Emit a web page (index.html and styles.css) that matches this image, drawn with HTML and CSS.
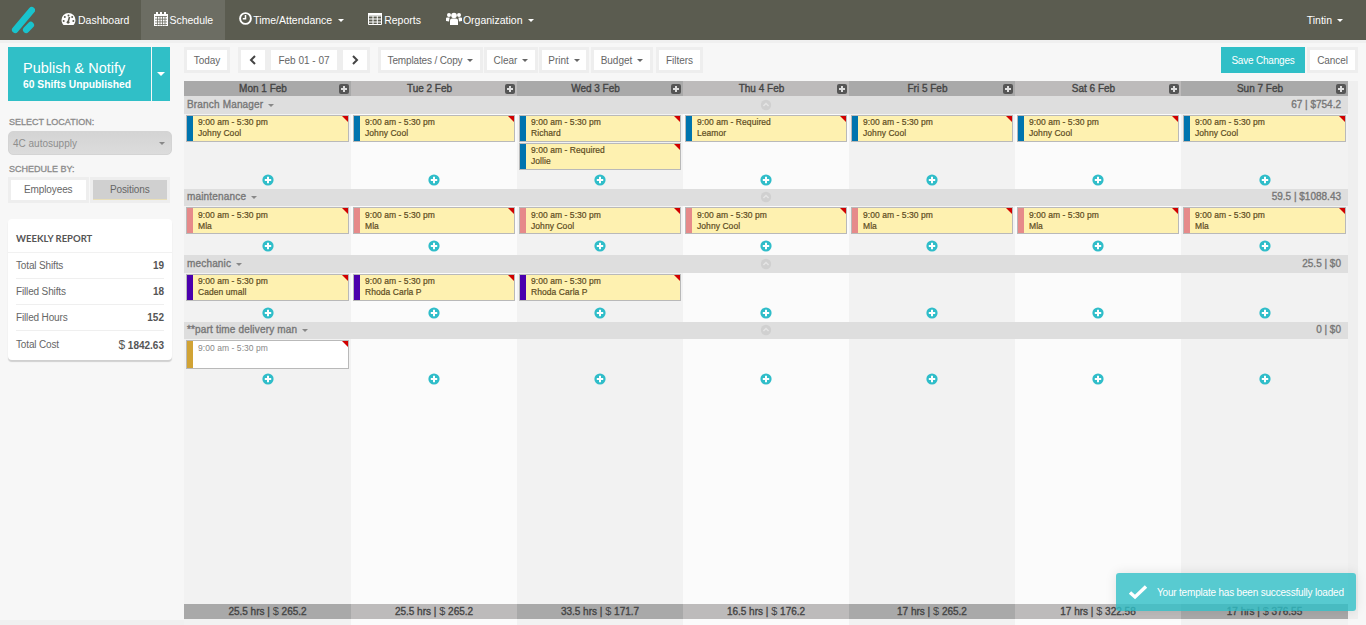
FILE: index.html
```html
<!DOCTYPE html>
<html lang="en">
<head>
<meta charset="utf-8">
<title>Schedule</title>
<link rel="stylesheet" href="styles.css">
</head>
<body>
<svg class="defs" width="0" height="0" aria-hidden="true">
  <defs>
    <g id="add"><circle cx="6" cy="6" r="5.6" fill="#2fbdc9"/><path d="M6 2.8v6.4M2.8 6h6.4" stroke="#fff" stroke-width="2"/></g>
    <g id="up"><circle cx="6" cy="6" r="5.2" fill="#d0d0d0"/><path d="M3.4 7 6 4.5 8.6 7" fill="none" stroke="#e4e4e4" stroke-width="1.6"/></g>
    <g id="dayplus"><rect x="0" y="0" width="10" height="10" rx="2" fill="#555"/><path d="M5 2v6M2 5h6" stroke="#ddd" stroke-width="2"/></g>
  </defs>
</svg>
<header class="topbar">
  <a class="logo" href="#"><svg width="26" height="34" viewBox="0 0 26 34"><path d="M6.200 26.800 22.800 7.200M17.200 26.800 21.800 22" stroke="#19c3cd" stroke-width="6.500" stroke-linecap="round" fill="none"/></svg></a>
  <nav class="nav">
    <a class="nav-item nav-dash" href="#"><svg class="ico" width="15" height="12" viewBox="0 0 14 12"><path d="M7 0a7 7 0 0 1 7 7c0 2-.8 3.600-2 5H2C.8 10.600 0 9 0 7a7 7 0 0 1 7-7z" fill="#fff"/><circle cx="7" cy="2.500" r="1" fill="#5b5c50"/><circle cx="3.300" cy="4" r="1" fill="#5b5c50"/><circle cx="10.700" cy="4" r="1" fill="#5b5c50"/><circle cx="2.200" cy="8" r="1" fill="#5b5c50"/><circle cx="11.800" cy="8" r="1" fill="#5b5c50"/><path d="M8 4 6.600 9" stroke="#5b5c50" stroke-width="1.600"/><circle cx="6.600" cy="9.300" r="1.400" fill="#5b5c50"/></svg>Dashboard</a>
    <a class="nav-item nav-active" href="#"><svg class="ico" width="14" height="14" viewBox="0 0 14 14"><path d="M0 2h14v12H0z" fill="#fff"/><path d="M3 0v3M7 0v3M11 0v3" stroke="#fff" stroke-width="2"/><path d="M1 4.500h12M1 7.200h12M1 9.900h12M1 12.500h12M3.500 4v9.500M6 4v9.500M8.500 4v9.500M11 4v9.500" stroke="#6c6d63" stroke-width=".8"/></svg>Schedule</a>
    <a class="nav-item nav-time" href="#"><svg class="ico" width="13" height="13" viewBox="0 0 13 13"><circle cx="6.500" cy="6.500" r="5.400" fill="none" stroke="#fff" stroke-width="1.900"/><path d="M6.500 3v3.800H3.800" fill="none" stroke="#fff" stroke-width="1.500"/></svg>Time/Attendance<i class="caret caret-light"></i></a>
    <a class="nav-item nav-reports" href="#"><svg class="ico" width="14" height="12" viewBox="0 0 14 12"><path d="M.5.500h13v11H.5zM.5 3h13M.5 6h13M.5 9h13M5 3v8.500M9.300 3v8.500" fill="none" stroke="#fff"/><path d="M0 0h14v2.500H0z" fill="#fff"/></svg>Reports</a>
    <a class="nav-item nav-org" href="#"><svg class="ico" width="16" height="13" viewBox="0 0 16 13"><circle cx="8" cy="3.500" r="2.800" fill="#fff"/><circle cx="3" cy="3" r="2" fill="#fff"/><circle cx="13" cy="3" r="2" fill="#fff"/><path d="M4 13V8.500Q4 6.500 6 6.500h4q2 0 2 2V13zM0 9V6.500Q0 5.500 1 5.500h2.600L3 9.500zM16 9V6.500q0-1-1-1h-2.600l.6 4z" fill="#fff"/></svg>Organization<i class="caret caret-light"></i></a>
  </nav>
  <a class="nav-user" href="#">Tintin<i class="caret caret-light"></i></a>
</header>

<div class="layout">
  <aside class="sidebar">
    <div class="publish">
      <a class="publish-main" href="#"><span class="publish-title">Publish &amp; Notify</span><span class="publish-sub">60 Shifts Unpublished</span></a>
      <a class="publish-drop" href="#"><i class="caret caret-white"></i></a>
    </div>
    <label class="side-label side-label-first">SELECT LOCATION:</label>
    <div class="select"><span>4C autosupply</span><i class="caret caret-grey"></i></div>
    <label class="side-label side-label-second">SCHEDULE BY:</label>
    <div class="tabs">
      <a class="tab tab-on" href="#"><span>Employees</span></a>
      <a class="tab tab-off" href="#"><span>Positions</span></a>
    </div>
    <section class="report">
      <h3 class="report-title">WEEKLY REPORT</h3>
      <div class="report-row"><span>Total Shifts</span><b>19</b></div>
      <div class="report-row"><span>Filled Shifts</span><b>18</b></div>
      <div class="report-row"><span>Filled Hours</span><b>152</b></div>
      <div class="report-row"><span>Total Cost</span><b class="report-cost"><em>$</em> 1842.63</b></div>
    </section>
  </aside>

  <main class="main">
    <div class="toolbar">
      <a class="btn btn-today" href="#"><span>Today</span></a>
      <div class="btn-group">
        <a class="btn btn-arrow" href="#"><span><svg width="8" height="10" viewBox="0 0 8 10"><path d="M6 1 2 5l4 4" fill="none" stroke="#444" stroke-width="2"/></svg></span></a>
        <a class="btn btn-range" href="#"><span>Feb 01 - 07</span></a>
        <a class="btn btn-arrow" href="#"><span><svg width="8" height="10" viewBox="0 0 8 10"><path d="M2 1l4 4-4 4" fill="none" stroke="#444" stroke-width="2"/></svg></span></a>
      </div>
      <div class="btn-group btn-group-menus">
        <a class="btn btn-templates" href="#"><span>Templates / Copy<i class="caret caret-dark"></i></span></a>
        <a class="btn btn-clear" href="#"><span>Clear<i class="caret caret-dark"></i></span></a>
        <a class="btn btn-print" href="#"><span>Print<i class="caret caret-dark"></i></span></a>
        <a class="btn btn-budget" href="#"><span>Budget<i class="caret caret-dark"></i></span></a>
      </div>
      <a class="btn btn-filters" href="#"><span>Filters</span></a>
      <div class="toolbar-right">
        <a class="btn-save" href="#">Save Changes</a>
        <a class="btn btn-cancel" href="#"><span>Cancel</span></a>
      </div>
    </div>

    <div class="board">
      <div class="schedule">
        <div class="days">
          <div class="day day-a">Mon 1 Feb<svg class="day-plus"><use href="#dayplus"/></svg></div>
          <div class="day day-b">Tue 2 Feb<svg class="day-plus"><use href="#dayplus"/></svg></div>
          <div class="day day-a">Wed 3 Feb<svg class="day-plus"><use href="#dayplus"/></svg></div>
          <div class="day day-b">Thu 4 Feb<svg class="day-plus"><use href="#dayplus"/></svg></div>
          <div class="day day-a">Fri 5 Feb<svg class="day-plus"><use href="#dayplus"/></svg></div>
          <div class="day day-b">Sat 6 Feb<svg class="day-plus"><use href="#dayplus"/></svg></div>
          <div class="day day-a">Sun 7 Feb<svg class="day-plus"><use href="#dayplus"/></svg></div>
        </div>

        <div class="group-head"><span class="group-name">Branch Manager<i class="caret caret-grey"></i></span><svg class="group-up"><use href="#up"/></svg><span class="group-total">67 | $754.2</span></div>
        <div class="cells cells-double">
          <div class="cell cell-a"><div class="shift"><i class="strip strip-blue"></i><p>9:00 am - 5:30 pm</p><p>Johny Cool</p></div><svg class="add"><use href="#add"/></svg></div>
          <div class="cell cell-b"><div class="shift"><i class="strip strip-blue"></i><p>9:00 am - 5:30 pm</p><p>Johny Cool</p></div><svg class="add"><use href="#add"/></svg></div>
          <div class="cell cell-a"><div class="shift"><i class="strip strip-blue"></i><p>9:00 am - 5:30 pm</p><p>Richard</p></div><div class="shift"><i class="strip strip-blue"></i><p>9:00 am - Required</p><p>Jollie</p></div><svg class="add"><use href="#add"/></svg></div>
          <div class="cell cell-b"><div class="shift"><i class="strip strip-blue"></i><p>9:00 am - Required</p><p>Leamor</p></div><svg class="add"><use href="#add"/></svg></div>
          <div class="cell cell-a"><div class="shift"><i class="strip strip-blue"></i><p>9:00 am - 5:30 pm</p><p>Johny Cool</p></div><svg class="add"><use href="#add"/></svg></div>
          <div class="cell cell-b"><div class="shift"><i class="strip strip-blue"></i><p>9:00 am - 5:30 pm</p><p>Johny Cool</p></div><svg class="add"><use href="#add"/></svg></div>
          <div class="cell cell-a"><div class="shift"><i class="strip strip-blue"></i><p>9:00 am - 5:30 pm</p><p>Johny Cool</p></div><svg class="add"><use href="#add"/></svg></div>
        </div>

        <div class="group-head"><span class="group-name">maintenance<i class="caret caret-grey"></i></span><svg class="group-up"><use href="#up"/></svg><span class="group-total">59.5 | $1088.43</span></div>
        <div class="cells">
          <div class="cell cell-a"><div class="shift"><i class="strip strip-pink"></i><p>9:00 am - 5:30 pm</p><p>Mla</p></div><svg class="add"><use href="#add"/></svg></div>
          <div class="cell cell-b"><div class="shift"><i class="strip strip-pink"></i><p>9:00 am - 5:30 pm</p><p>Mla</p></div><svg class="add"><use href="#add"/></svg></div>
          <div class="cell cell-a"><div class="shift"><i class="strip strip-pink"></i><p>9:00 am - 5:30 pm</p><p>Johny Cool</p></div><svg class="add"><use href="#add"/></svg></div>
          <div class="cell cell-b"><div class="shift"><i class="strip strip-pink"></i><p>9:00 am - 5:30 pm</p><p>Johny Cool</p></div><svg class="add"><use href="#add"/></svg></div>
          <div class="cell cell-a"><div class="shift"><i class="strip strip-pink"></i><p>9:00 am - 5:30 pm</p><p>Mla</p></div><svg class="add"><use href="#add"/></svg></div>
          <div class="cell cell-b"><div class="shift"><i class="strip strip-pink"></i><p>9:00 am - 5:30 pm</p><p>Mla</p></div><svg class="add"><use href="#add"/></svg></div>
          <div class="cell cell-a"><div class="shift"><i class="strip strip-pink"></i><p>9:00 am - 5:30 pm</p><p>Mla</p></div><svg class="add"><use href="#add"/></svg></div>
        </div>

        <div class="group-head"><span class="group-name">mechanic<i class="caret caret-grey"></i></span><svg class="group-up"><use href="#up"/></svg><span class="group-total">25.5 | $0</span></div>
        <div class="cells">
          <div class="cell cell-a"><div class="shift"><i class="strip strip-purple"></i><p>9:00 am - 5:30 pm</p><p>Caden umall</p></div><svg class="add"><use href="#add"/></svg></div>
          <div class="cell cell-b"><div class="shift"><i class="strip strip-purple"></i><p>9:00 am - 5:30 pm</p><p>Rhoda Carla P</p></div><svg class="add"><use href="#add"/></svg></div>
          <div class="cell cell-a"><div class="shift"><i class="strip strip-purple"></i><p>9:00 am - 5:30 pm</p><p>Rhoda Carla P</p></div><svg class="add"><use href="#add"/></svg></div>
          <div class="cell cell-b"><svg class="add"><use href="#add"/></svg></div>
          <div class="cell cell-a"><svg class="add"><use href="#add"/></svg></div>
          <div class="cell cell-b"><svg class="add"><use href="#add"/></svg></div>
          <div class="cell cell-a"><svg class="add"><use href="#add"/></svg></div>
        </div>

        <div class="group-head"><span class="group-name">**part time delivery man<i class="caret caret-grey"></i></span><svg class="group-up"><use href="#up"/></svg><span class="group-total">0 | $0</span></div>
        <div class="cells">
          <div class="cell cell-a"><div class="shift shift-open"><i class="strip strip-gold"></i><p>9:00 am - 5:30 pm</p></div><svg class="add"><use href="#add"/></svg></div>
          <div class="cell cell-b"><svg class="add"><use href="#add"/></svg></div>
          <div class="cell cell-a"><svg class="add"><use href="#add"/></svg></div>
          <div class="cell cell-b"><svg class="add"><use href="#add"/></svg></div>
          <div class="cell cell-a"><svg class="add"><use href="#add"/></svg></div>
          <div class="cell cell-b"><svg class="add"><use href="#add"/></svg></div>
          <div class="cell cell-a"><svg class="add"><use href="#add"/></svg></div>
        </div>

        <div class="cells cells-fill">
          <div class="cell-a"></div><div class="cell-b"></div><div class="cell-a"></div><div class="cell-b"></div><div class="cell-a"></div><div class="cell-b"></div><div class="cell-a"></div>
        </div>

        <div class="days days-foot">
          <div class="day day-a">25.5 hrs | <em>$</em> 265.2</div>
          <div class="day day-b">25.5 hrs | <em>$</em> 265.2</div>
          <div class="day day-a">33.5 hrs | <em>$</em> 171.7</div>
          <div class="day day-b">16.5 hrs | <em>$</em> 176.2</div>
          <div class="day day-a">17 hrs | <em>$</em> 265.2</div>
          <div class="day day-b">17 hrs | <em>$</em> 322.58</div>
          <div class="day day-a">17 hrs | <em>$</em> 376.55</div>
        </div>

        <div class="cells cells-tail">
          <div class="cell-a"></div><div class="cell-b"></div><div class="cell-a"></div><div class="cell-b"></div><div class="cell-a"></div><div class="cell-b"></div><div class="cell-a"></div>
        </div>
      </div>
      <div class="gutter"></div>
    </div>
  </main>
</div>

<div class="toast">
  <svg class="toast-check" width="20" height="16" viewBox="0 0 20 16"><path d="M2 8.500 7 13 18 2.500" fill="none" stroke="#fff" stroke-width="3.400"/></svg>
  <span>Your template has been successfully loaded</span>
</div>
</body>
</html>
```

FILE: styles.css
```css
* { box-sizing: border-box; }
html, body { margin: 0; height: 100%; }
body {
  background: #f0f0f0;
  font-family: "Liberation Sans", Arial, sans-serif;
  font-size: 10px;
  color: #666;
  overflow: hidden;
}
a { color: inherit; text-decoration: none; }
p, h3 { margin: 0; }
em { font-style: normal; }
.defs { position: absolute; }

/* top bar */
.topbar {
  height: 40px;
  background: #5b5c50;
  display: flex;
  align-items: stretch;
  color: #fff;
  font-size: 10.500px;
}
.logo { width: 48px; padding: 3px 0 0 9px; display: block; }
.nav { display: flex; }
.nav-item {
  display: flex;
  align-items: center;
  padding: 0 12px 0 13px;
  gap: 1px;
}
.nav-active { background: #6c6d63; }
.nav-dash .ico { margin-right: 1px; }
.nav-time { padding-left: 14px; }
.nav-reports { padding-left: 12px; }
.nav-reports .ico { margin-right: 1px; }
.nav-org { padding-left: 13px; }
.ico { flex: none; margin-top: -3px; }
.nav-user { margin-left: auto; margin-right: 23px; display: flex; align-items: center; }
.caret {
  display: inline-block;
  width: 0;
  height: 0;
  margin-left: 5px;
  border-left: 3.500px solid transparent;
  border-right: 3.500px solid transparent;
  border-top: 3.500px solid #fff;
  vertical-align: middle;
}
.caret-white { border-left-width: 4px; border-right-width: 4px; border-top-width: 4px; margin: 0; }
.caret-grey { border-top-color: #888; }
.caret-dark { border-top-color: #666; }

.layout { display: flex; height: 585px; padding-top: 3px; }

/* side column */
.sidebar {
  width: 184px;
  height: 577px;
  flex: none;
  background: #f7f7f7;
  padding: 4px 12px 0 8px;
}
.publish { display: flex; height: 54px; width: 162px; color: #fff; }
.publish-main {
  width: 143px;
  background: #30bfc7;
  padding: 13px 0 0 15px;
  display: flex;
  flex-direction: column;
}
.publish-title { font-size: 14.500px; line-height: 16px; }
.publish-sub { font-size: 10.300px; font-weight: bold; line-height: 15px; margin-top: 1px; }
.publish-drop {
  margin-left: 1px;
  width: 18px;
  background: #30bfc7;
  display: flex;
  align-items: center;
  justify-content: center;
}
.side-label {
  display: block;
  font-size: 9px;
  color: #8b8b8b;
  line-height: 12px;
  margin-left: 1px;
  -webkit-text-stroke: .3px #8b8b8b;
}
.side-label-first { margin-top: 15px; }
.side-label-second { margin-top: 8px; }
.select {
  margin-top: 3px;
  width: 164px;
  height: 24px;
  border-radius: 5px;
  background: linear-gradient(#d4d4d4, #dcdcdc);
  border: 1px solid #d4d4d4;
  color: #8e8e8e;
  font-size: 10px;
  display: flex;
  align-items: center;
  justify-content: space-between;
  padding: 0 6px 0 4px;
}
.tabs { display: flex; gap: 1px; margin-top: 2px; width: 162px; }
.tab { flex: 1; height: 26px; border: 3px solid #eee; display: block; color: #666; letter-spacing: -.1px; }
.tab span { display: flex; height: 100%; align-items: center; justify-content: center; padding-bottom: 1px; }
.tab-on span { background: #fff; }
.tab-off span { background: #d0d0d0; border-bottom: 1px solid #e9dfb8; }
.report {
  margin-top: 16px;
  width: 164px;
  height: 141px;
  background: #fff;
  border-radius: 4px;
  box-shadow: 0 2px 1px #d0d0d0;
  padding: 0 8px;
}
.report-title {
  font-family: Lato, "Liberation Sans", sans-serif;
  font-size: 9.500px;
  font-weight: bold;
  color: #555;
  line-height: 33px;
  height: 33.500px;
  padding: 3px 0 0 8px;
  border-bottom: 1px solid #f1f1f1;
  margin: 0 -8px;
}
.report-row {
  height: 26.300px;
  display: flex;
  align-items: center;
  justify-content: space-between;
  border-bottom: 1px solid #efefef;
  color: #666;
  font-size: 10px;
}
.report-row span { letter-spacing: -.15px; }
.report-row:last-child { border-bottom: 0; }
.report-row b { color: #555; font-size: 10px; }
.report-row .report-cost em { font-size: 12px; font-weight: normal; }

/* toolbar */
.main { flex: 1; min-width: 0; background: #f7f7f7; padding-top: 4px; display: flex; flex-direction: column; }
.toolbar { display: flex; height: 26px; padding-right: 8px; }
.btn { height: 26px; border: 3px solid #eee; display: block; color: #666; font-size: 10px; flex: none; }
.btn > span { background: #fff; height: 100%; display: flex; align-items: center; justify-content: center; }
.btn-group { display: flex; margin-left: 8px; }
.btn-today { width: 46px; }
.btn-arrow { width: 30px; }
.btn-range { width: 72px; }
.btn-group-menus { gap: 1px; }
.btn-templates { width: 105px; letter-spacing: -.15px; }
.btn-clear { width: 54px; }
.btn-print { width: 50px; }
.btn-budget { width: 62px; margin-left: 1px; }
.btn-filters { width: 47px; margin-left: 3px; }
.toolbar-right { margin-left: auto; display: flex; gap: 2px; }
.btn-save {
  width: 84px;
  background: #30bfc7;
  color: #fff;
  display: flex;
  align-items: center;
  justify-content: center;
  font-size: 10px;
  letter-spacing: -.2px;
}
.btn-cancel { width: 51px; letter-spacing: -.1px; }

/* schedule */
.board { display: flex; margin-top: 8px; flex: 1; min-height: 0; }
.schedule { width: 1164px; display: flex; flex-direction: column; }
.gutter { width: 10px; height: 538px; background: #efefef; }
.days, .cells { display: grid; grid-template-columns: 167px repeat(5, 166px) 167px; }
.days { height: 15px; flex: none; }
.day {
  position: relative;
  text-align: center;
  line-height: 15px;
  font-size: 10px;
  color: #444;
  padding-right: 9px;
  -webkit-text-stroke: .35px #444;
}
.day-a { background: #a9a9a9; }
.day-b { background: #bdbbbb; }
.day-plus { position: absolute; right: 2px; top: 2.500px; width: 10px; height: 10px; }
.days-foot .day { padding-right: 0; }
.days-foot .day em { font-size: 11px; -webkit-text-stroke: 0; }
.group-head {
  height: 17.500px;
  flex: none;
  background: #dedede;
  position: relative;
  display: flex;
  align-items: center;
  justify-content: space-between;
  padding: 0 7px 1px 3px;
  color: #777;
  font-size: 10px;
  -webkit-text-stroke: .35px #777;
}
.group-name { letter-spacing: .17px; }
.group-up { position: absolute; left: 576px; top: 2.500px; width: 12px; height: 12px; }
.cells { height: 49px; flex: none; }
.cells-double { height: 75px; }
.cells-fill { flex: 1; height: auto; min-height: 0; }
.cells-tail { height: 6px; }
.cell { display: flex; flex-direction: column; padding: 1px 2px 3px; min-width: 0; }
.cell-a { background: #f2f2f2; }
.cell-b { background: #fbfbfb; }
.shift {
  position: relative;
  height: 27px;
  flex: none;
  margin-bottom: 1px;
  background: #fef1b0;
  border: 1px solid #b9b9b9;
  padding: 1.500px 0 0 11px;
  color: #5d4c1f;
  font-size: 8.500px;
  letter-spacing: .06px;
  line-height: 11px;
  overflow: hidden;
  -webkit-text-stroke: .2px #5d4c1f;
}
.shift::after {
  content: "";
  position: absolute;
  right: 0;
  top: 0;
  border-top: 6px solid #d10000;
  border-left: 6px solid transparent;
}
.shift p { white-space: nowrap; }
.strip { position: absolute; left: 0; top: 0; bottom: 0; width: 6px; }
.strip-blue { background: #0074ae; }
.strip-pink { background: #e68a8a; }
.strip-purple { background: #4b00ad; }
.strip-gold { background: #d1a335; }
.shift-open { background: #fff; color: #888; height: 28.500px; -webkit-text-stroke: 0; }
.add { width: 12px; height: 12px; margin: auto auto 0; flex: none; }

/* toast */
.toast {
  position: absolute;
  left: 1116px;
  top: 573px;
  width: 240px;
  height: 38px;
  background: rgba(48, 191, 199, .8);
  border-radius: 3px;
  color: #fff;
  display: flex;
  align-items: center;
  padding-left: 12px;
  gap: 9px;
  font-size: 10px;
  letter-spacing: -.19px;
  box-shadow: 0 0 12px rgba(0, 0, 0, .1);
}
.toast-check { flex: none; }
```
